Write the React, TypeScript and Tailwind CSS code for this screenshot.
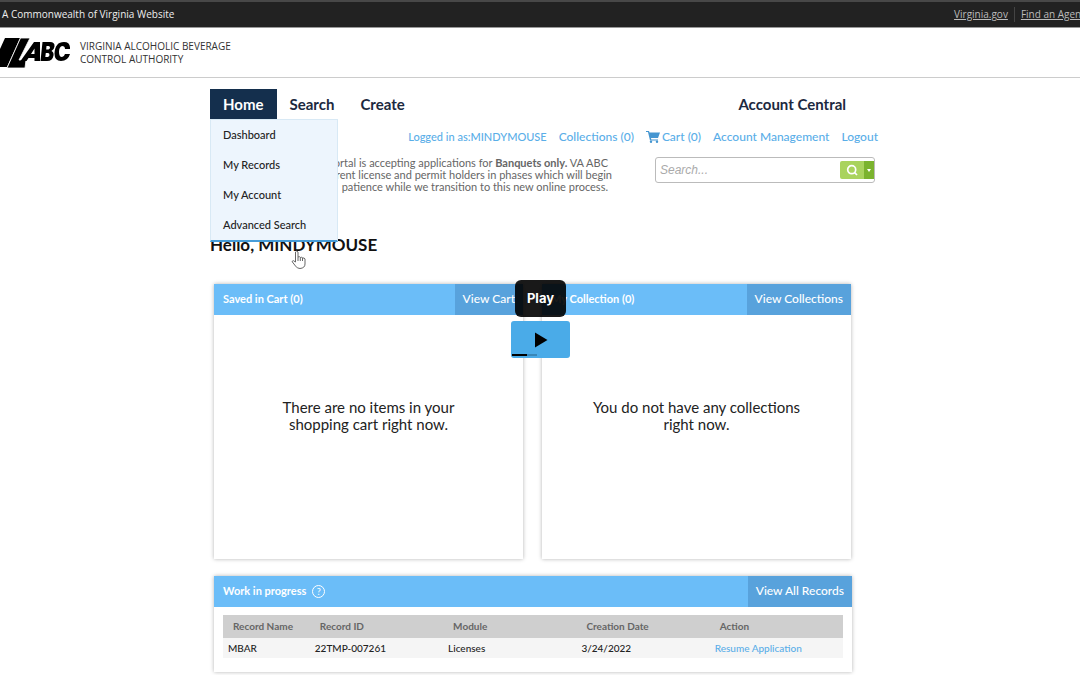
import React from "react";

const menuItems = ["Dashboard", "My Records", "My Account", "Advanced Search"];

function Logo() {
  return (
    <svg viewBox="0 0 70 32" className="h-8 w-[70px] shrink-0" role="img" aria-label="ABC">
      <path d="M5 1H20L7 30H0V12Z" fill="#000" />
      <path d="M20.500 1H30L19 23H26L25 31H7Z" fill="#000" stroke="#fff" strokeWidth="0.800" />
      <path fillRule="evenodd" fill="#000" d="M20.500 24L34 5H40L40 24H34.500V21H28.500L26.500 24ZM31 17H34.500V11.500Z" />
      <path fillRule="evenodd" fill="#000" d="M42.500 5H50Q55 5 54.500 9.500Q54 13 51.500 14Q54 15 53.500 18.500Q52.500 24 47 24H40.500ZM46.500 9L46.200 12.500H48.500Q50 12 50 10.500Q50 9 48.500 9ZM45.800 16L45.300 20H47.800Q49.500 19.500 49.500 18Q49.500 16 48 16Z" />
      <path d="M70 12H65Q65 9 62 9Q59 10 59 15Q59 20 62 20Q64 20 65 17H70Q68 24 61 24Q54.500 24 54.500 16.500Q55 5 64 5Q70.500 5 70 12Z" fill="#000" />
    </svg>
  );
}

function Panel({ title, action, message }: { title: string; action: string; message: string }) {
  return (
    <section className="flex h-[275px] flex-1 flex-col bg-white shadow-[0_0_4px_rgba(0,0,0,0.3)]">
      <header className="flex h-[31px] shrink-0 items-center justify-between bg-[#6bbdf8] text-white">
        <h2 className="pl-[9px] text-[11px] font-bold">{title}</h2>
        <a href="#" className="flex h-full items-center bg-[#58a2dc] px-2 pb-[2px] text-xs font-medium">{action}</a>
      </header>
      <p className="mx-auto mt-[84px] w-[230px] text-center text-[15px] leading-[17px] text-[#222]">{message}</p>
    </section>
  );
}

export default function App() {
  return (
    <div className="min-h-screen overflow-x-hidden bg-white font-['Lato',sans-serif] text-[#222]">
      <div className="flex h-7 items-center justify-between overflow-hidden border-t-2 border-b border-t-[#484848] border-b-[#999] bg-[#222] font-['Open_Sans',sans-serif] text-[10px] whitespace-nowrap text-[#eee]">
        <span className="pl-[2px]">A Commonwealth of Virginia Website</span>
        <nav className="-mr-[11px] flex text-[#bbb]">
          <a href="#" className="border-r border-[#444] pr-[6px] underline">Virginia.gov</a>
          <a href="#" className="pl-[6px] underline">Find an Agency</a>
        </nav>
      </div>
      <header className="flex h-[50px] items-center gap-[10px] border-b border-[#ccc]">
        <Logo />
        <p className="font-['Open_Sans',sans-serif] text-[10px] leading-[13px] text-[#333]">VIRGINIA ALCOHOLIC BEVERAGE<br />CONTROL AUTHORITY</p>
      </header>

      <main className="mx-auto w-full max-w-[676px] pt-[11px] pl-2">
        <div className="flex justify-between">
          <nav className="relative flex text-[15px] leading-[30px] font-bold text-[#1c2940]">
            <a href="#" className="bg-[#142f4d] px-[13px] text-white">Home</a>
            <a href="#" className="px-[13px]">Search</a>
            <a href="#" className="px-[13px]">Create</a>
            <ul className="absolute top-full left-0 z-10 w-32 border border-b-2 border-[#d8e9f5] border-b-[#489dd8] bg-[#edf5fd] text-[11px] font-medium text-[#222]">
              {menuItems.map((item) => (
                <li key={item}><a href="#" className="block px-3">{item}</a></li>
              ))}
            </ul>
          </nav>
          <a href="#" className="pr-8 text-[15px] leading-[30px] font-bold text-[#1c2940]">Account Central</a>
        </div>

        <div className="flex items-center justify-end gap-3 pt-2 text-xs leading-5 font-medium whitespace-nowrap text-[#5aaee8]">
          <span className="text-[11px]">Logged in as:MINDYMOUSE</span>
          <a href="#">Collections (0)</a>
          <a href="#" className="flex items-center gap-[2px]">
            <svg viewBox="0 0 14 12" className="h-3 w-[14px]" fill="#4596d1" aria-hidden="true">
              <path d="M0 0H3L3.500 1.500H14L12 7H5L5.300 8.500H12V9.500H4L2 1H0Z" />
              <circle cx="5" cy="10.800" r="1.200" /><circle cx="11" cy="10.800" r="1.200" />
            </svg>
            Cart (0)
          </a>
          <a href="#">Account Management</a>
          <a href="#">Logout</a>
        </div>

        <div className="flex justify-between pt-[10px]">
          <p className="w-[402px] text-right text-[11px] leading-3 whitespace-nowrap text-[#666]">
            <span className="block pr-1">The portal is accepting applications for <b>Banquets only.</b> VA ABC</span>
            <span className="block">current license and permit holders in phases which will begin</span>
            <span className="block pr-1">patience while we transition to this new online process.</span>
          </p>
          <form className="mr-[3px] flex h-[26px] w-[220px] items-center rounded-[3px] border border-[#bbb]">
            <input type="search" aria-label="Search" placeholder="Search..." className="min-w-0 flex-1 bg-transparent px-1 font-['Liberation_Sans',sans-serif] text-xs text-[#555] italic outline-none placeholder:text-[#aaa]" />
            <button type="button" aria-label="Search" className="flex h-[18px] w-6 items-center justify-center rounded-l-[2px] bg-[#a9d35d]">
              <svg viewBox="0 0 12 12" className="size-3" fill="none" stroke="#fff" strokeWidth="1.700" aria-hidden="true"><circle cx="5.700" cy="5.700" r="4" /><path d="M8.500 8.500L11 11" /></svg>
            </button>
            <button type="button" aria-label="Search options" className="flex h-[18px] w-[10px] items-center justify-center bg-[#7bb32e]">
              <svg viewBox="0 0 4 3" className="h-[3px] w-1" fill="#fff" aria-hidden="true"><path d="M0 0H4L2 3Z" /></svg>
            </button>
          </form>
        </div>

        <div className="relative pt-[42px]">
          <h1 className="text-[17px] leading-5 font-bold text-[#111]">Hello, MINDYMOUSE</h1>
          <svg viewBox="0 0 16 20" className="absolute top-[57px] left-[81px] z-20 h-5 w-4" fill="#fff" stroke="#666" strokeWidth="1" strokeLinejoin="round" aria-hidden="true">
            <path d="M4.500 12V2Q5.500 0 7 2V7Q8.500 6 9.300 7.500Q11 6.500 11.500 8Q13.500 7.500 14 9V14Q14 18 9 18.500Q6 18.500 4.500 16L1 11.500Q2 9.500 4.500 12Z" />
            <path d="M7 7V11M9.300 7.500V11M11.500 8V11" />
          </svg>
        </div>

        <div className="relative mt-[29px] mr-[27px] ml-1 flex gap-[19px]">
          <Panel title="Saved in Cart (0)" action="View Cart" message="There are no items in your shopping cart right now." />
          <Panel title="My Collection (0)" action="View Collections" message="You do not have any collections right now." />
          <div className="absolute -top-1 left-[297px] z-20 flex w-[59px] flex-col items-center gap-1">
            <span role="tooltip" className="flex h-[37px] w-[51px] items-center justify-center rounded-md bg-black/90 font-['Inter',sans-serif] text-[13px] font-bold text-white">Play</span>
            <button type="button" aria-label="Play" className="relative flex h-[37px] w-full items-center justify-center overflow-hidden rounded-[3px] bg-[#4aabe8]">
              <svg viewBox="0 0 14 16" className="h-4 w-[14px]" aria-hidden="true"><path d="M1 0.500L13.500 8L1 15.500Z" /></svg>
              <span className="absolute bottom-[2px] left-[1px] h-[2px] w-[25px] bg-[#3987b8]" />
              <span className="absolute bottom-[2px] left-[1px] h-[2px] w-[15px] bg-black" />
            </button>
          </div>
        </div>

        <section className="mt-[17px] mr-[26px] ml-1 bg-white pb-[14px] shadow-[0_0_4px_rgba(0,0,0,0.3)]">
          <header className="flex h-[31px] items-center justify-between bg-[#6bbdf8] text-white">
            <h2 className="flex items-center gap-[6px] pl-[9px] text-[11px] font-bold">
              Work in progress
              <button type="button" aria-label="Help" className="flex size-[13px] items-center justify-center rounded-full border border-white text-[9px] font-normal">?</button>
            </h2>
            <a href="#" className="flex h-full items-center bg-[#58a2dc] px-2 pb-[2px] text-xs font-medium">View All Records</a>
          </header>
          <div className="px-[9px] pt-2">
            <table className="w-full table-fixed text-left text-[10px]">
              <colgroup><col className="w-[14%]" /><col className="w-[21.500%]" /><col className="w-[21.500%]" /><col className="w-[21.500%]" /><col /></colgroup>
              <thead className="bg-[#cfcfcf] text-[#666]">
                <tr className="h-[23px]">
                  {["Record Name", "Record ID", "Module", "Creation Date", "Action"].map((h) => <th key={h} className="pl-[10px] font-bold">{h}</th>)}
                </tr>
              </thead>
              <tbody className="bg-[#f5f5f5] font-medium">
                <tr className="h-5">
                  <td className="pl-[5px]">MBAR</td><td className="pl-[5px]">22TMP-007261</td><td className="pl-[5px]">Licenses</td><td className="pl-[5px]">3/24/2022</td>
                  <td className="pl-[5px]"><a href="#" className="text-[#5aaee8]">Resume Application</a></td>
                </tr>
              </tbody>
            </table>
          </div>
        </section>
      </main>
    </div>
  );
}
